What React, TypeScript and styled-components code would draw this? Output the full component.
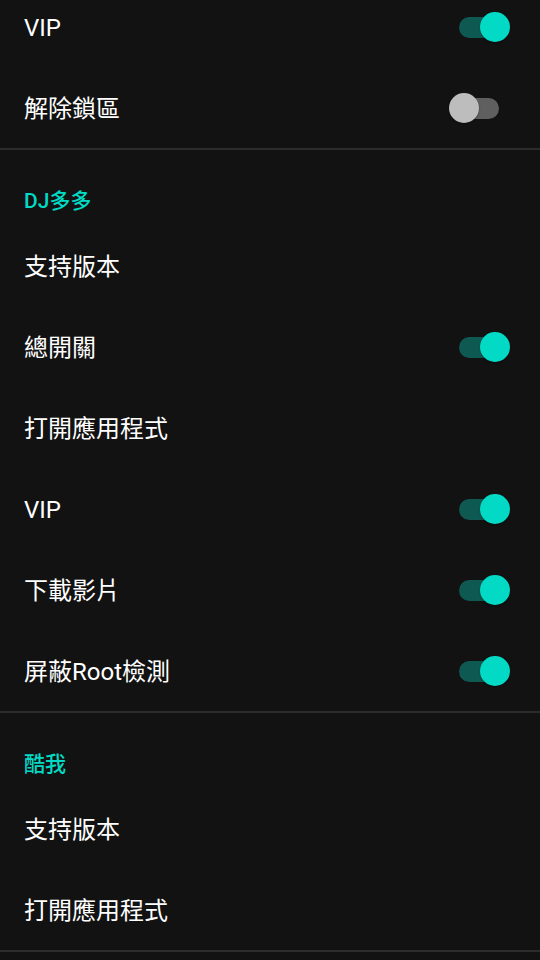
import React from "react";
import styled, { createGlobalStyle } from "styled-components";

const GlobalStyle = createGlobalStyle`
  html, body {
    margin: 0;
    padding: 0;
    background: #121212;
  }
  body {
    font-family: Roboto, "Noto Sans CJK TC", "Noto Sans", sans-serif;
    overflow: hidden;
  }
`;

const Screen = styled.div`
  width: 540px;
  height: 960px;
  background: #121212;
  overflow: hidden;
`;

// the list is scrolled a little, so the first row is cut at the top
const List = styled.div`
  display: flex;
  flex-direction: column;
  margin-top: -14px;
`;

const Row = styled.div`
  height: 81px;
  box-sizing: border-box;
  padding: 0 29px 0 24px;
  display: flex;
  align-items: center;
  justify-content: space-between;
`;

const Title = styled.span`
  color: #ffffff;
  font-size: 24px;
  line-height: 30px;
  padding-top: 2px;
  font-family: Roboto, "Noto Sans CJK TC", sans-serif;
`;

const Header = styled.div`
  height: 75px;
  box-sizing: border-box;
  padding: 40px 24px 0;
  color: #03dac5;
  font-size: 21px;
  line-height: 22px;
  font-weight: 500;
  font-family: Roboto, "Noto Sans CJK TC", sans-serif;
`;

const Divider = styled.div`
  height: 2px;
  background: #2c2c2c;
`;

const SwitchBox = styled.div`
  position: relative;
  width: 62px;
  height: 30px;
  flex-shrink: 0;
`;

const Track = styled.div<{ $on: boolean }>`
  position: absolute;
  left: 10px;
  top: 5px;
  width: 40px;
  height: 21px;
  border-radius: 11px;
  background: ${(p) => (p.$on ? "#0e5a53" : "#5f5f5f")};
`;

const Thumb = styled.div<{ $on: boolean }>`
  position: absolute;
  top: 0;
  left: ${(p) => (p.$on ? "31px" : "0")};
  width: 30px;
  height: 30px;
  border-radius: 50%;
  background: ${(p) => (p.$on ? "#03dac5" : "#bdbdbd")};
  box-shadow: 0 1px 2px rgba(0, 0, 0, 0.35);
`;

const Switch = ({ on }: { on: boolean }) => (
  <SwitchBox>
    <Track $on={on} />
    <Thumb $on={on} />
  </SwitchBox>
);

type ItemProps = { title: string; toggle?: boolean };

const Item = ({ title, toggle }: ItemProps) => (
  <Row>
    <Title>{title}</Title>
    {toggle !== undefined && <Switch on={toggle} />}
  </Row>
);

const App = () => {
  return (
    <Screen>
      <GlobalStyle />
      <List>
        <Item title="VIP" toggle={true} />
        <Item title="解除鎖區" toggle={false} />
        <Divider />
        <Header>DJ多多</Header>
        <Item title="支持版本" />
        <Item title="總開關" toggle={true} />
        <Item title="打開應用程式" />
        <Item title="VIP" toggle={true} />
        <Item title="下載影片" toggle={true} />
        <Item title="屏蔽Root檢測" toggle={true} />
        <Divider />
        <Header>酷我</Header>
        <Item title="支持版本" />
        <Item title="打開應用程式" />
        <Divider />
      </List>
    </Screen>
  );
};

export default App;
